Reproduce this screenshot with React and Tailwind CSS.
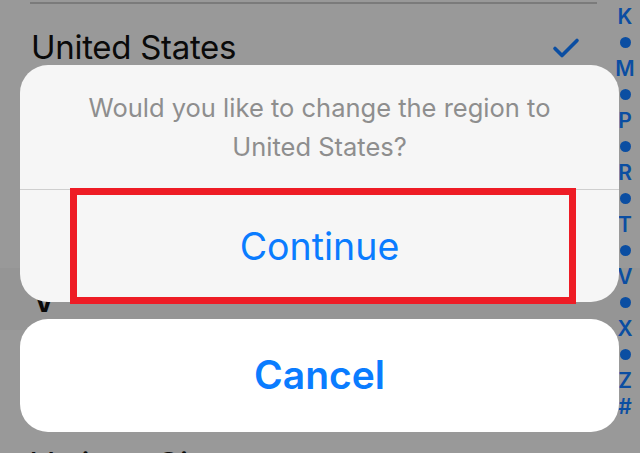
const indexItems = ["K", "•", "M", "•", "P", "•", "R", "•", "T", "•", "V", "•", "X", "•", "Z", "#"];

const RegionAlert = () => {
  return (
    <div
      className="relative w-[640px] h-[453px] overflow-hidden bg-[#999999]"
      style={{ fontFamily: "Inter, 'Noto Sans', sans-serif" }}
    >
      {/* list behind the dimmed overlay */}
      <div className="ml-[30px] mt-[2px] h-[2px] w-[567px] bg-[#7b7b7b]" />
      <div className="flex h-[88px] items-center justify-between pl-[31px] pr-[60px]">
        <span className="text-[33px] text-[#0a0a0a] tracking-[-0.3px]">United States</span>
        <svg width="28" height="22" viewBox="0 0 28 22" fill="none">
          <path d="M3 11.5L10 18.5L25 3.5" stroke="#0b4ea2" strokeWidth="3.6" strokeLinecap="round" strokeLinejoin="round" />
        </svg>
      </div>
      <div className="h-[88px]" />
      <div className="h-[88px]" />
      <div className="flex h-[62px] items-end bg-[#959595] pb-[14px] pl-[34px]">
        <span className="text-[27px] font-bold leading-[27px] text-[#0a0a0a]">V</span>
      </div>
      <div className="flex h-[88px] items-center pl-[31px]">
        <span className="text-[33px] text-[#0a0a0a]">Vanuatu</span>
      </div>
      <div className="flex h-[88px] items-center pl-[31px] pt-[6px]">
        <span className="text-[33px] text-[#0a0a0a]">Vatican City</span>
      </div>

      {/* section index */}
      <div className="absolute right-[6px] top-[3px] flex w-[18px] flex-col items-center">
        {indexItems.map((item, i) => (
          <div key={i} className="flex h-[26px] items-center justify-center">
            {item === "•" ? (
              <div className="h-[11px] w-[11px] rounded-full bg-[#0b4ea2]" />
            ) : (
              <span className="text-[21px] font-semibold leading-none text-[#0b4ea2]">{item}</span>
            )}
          </div>
        ))}
      </div>

      {/* action sheet */}
      <div className="absolute inset-0 flex flex-col pl-[20px] pr-[21px] pt-[65px]">
        <div className="relative flex h-[237px] flex-col rounded-[28px] bg-[#f6f6f6]">
          <div className="flex h-[124px] flex-col items-center justify-center text-center text-[25.5px] leading-[39px] text-[#8e8e8e]">
            <span>Would you like to change the region to</span>
            <span>United States?</span>
          </div>
          <div className="h-[1px] bg-[#cfcfcf]" />
          <div className="flex flex-1 items-center justify-center pt-[2px]">
            <span className="text-[37.5px] text-[#0a7cff]">Continue</span>
          </div>
          <div className="absolute left-[50px] top-[123px] h-[116px] w-[506px] border-[7px] border-[#ee1c25]" />
        </div>
        <div className="mt-[17px] flex h-[113px] items-center justify-center rounded-[28px] bg-white">
          <span className="text-[39px] font-semibold text-[#0a7cff]">Cancel</span>
        </div>
      </div>
    </div>
  );
};

export default function App() {
  return <RegionAlert />;
}
